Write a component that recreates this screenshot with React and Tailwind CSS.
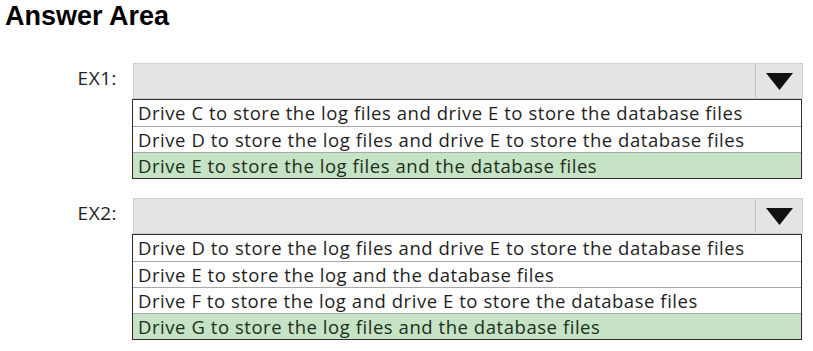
const questions = [
  {
    label: 'EX1:',
    options: [
      'Drive C to store the log files and drive E to store the database files',
      'Drive D to store the log files and drive E to store the database files',
      'Drive E to store the log files and the database files',
    ],
    selected: 2,
  },
  {
    label: 'EX2:',
    options: [
      'Drive D to store the log files and drive E to store the database files',
      'Drive E to store the log and the database files',
      'Drive F to store the log and drive E to store the database files',
      'Drive G to store the log files and the database files',
    ],
    selected: 3,
  },
];

const DropdownQuestion = ({ label, options, selected }) => {
  return (
    <div className="flex">
      <div className="w-[133px] shrink-0 pr-[16px] pt-[2px] text-right text-[19px] leading-[26px] tracking-[0.5px] text-[#222]">
        {label}
      </div>
      <div className="flex flex-col">
        <div className="flex h-[36px] w-[670px] border border-[#cfcfcf] bg-[#e4e4e4]">
          <div className="flex-1" />
          <div className="flex w-[47px] items-center justify-center border-l border-[#c4c4c4]">
            <svg width="27" height="17" viewBox="0 0 27 17">
              <polygon points="0,0 27,0 13.5,17" fill="#111" />
            </svg>
          </div>
        </div>
        <div className="ml-[-1px] w-[670px] border border-[#2e2e2e] bg-white">
          {options.map((option, index) => (
            <div
              key={option}
              className={`h-[26px] pl-[5px] text-[18.5px] leading-[26px] tracking-[0.55px] whitespace-nowrap ${
                index > 0 ? 'border-t border-[#a8a8a8]' : ''
              } ${index === selected ? 'bg-[#c6e3c5] text-[#1c2e1c]' : 'text-[#1e1e1e]'}`}
            >
              {option}
            </div>
          ))}
        </div>
      </div>
    </div>
  );
};

const App = () => {
  return (
    <div className="h-[351px] w-[813px] overflow-hidden bg-white font-['Open_Sans',sans-serif]">
      <h1 className="pl-[5px] font-['Liberation_Sans',Arial,sans-serif] text-[27px] leading-[32px] font-bold text-black">
        Answer Area
      </h1>
      <div className="mt-[31px] flex flex-col gap-[19px]">
        {questions.map((q) => (
          <DropdownQuestion key={q.label} {...q} />
        ))}
      </div>
    </div>
  );
};

export default App;
